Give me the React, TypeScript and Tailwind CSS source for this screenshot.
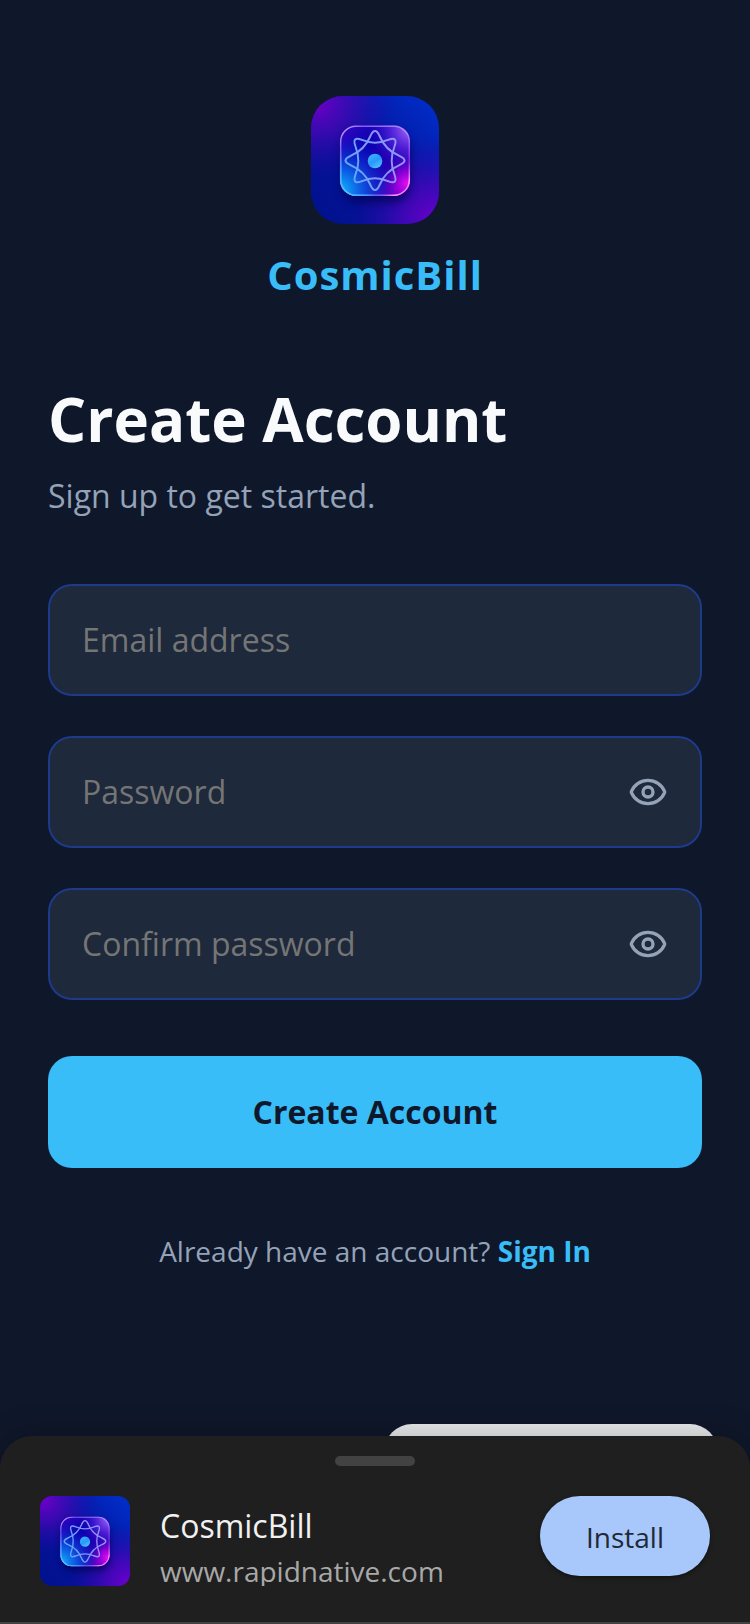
import { useId, useState } from "react";
import { Eye, EyeOff } from "lucide-react";

function AppIcon({ className }: { className: string }) {
  const id = useId().replace(/[^a-zA-Z0-9]/g, "");
  const ref = (name: string) => `url(#${id}${name})`;
  const orbit =
    "M0-29.5C2.6-29.500 3.600-26.600 4.800-24Q10.500-10.500 24-4.800C26.600-3.600 29.500-2.600 29.500 0C29.500 2.600 26.600 3.600 24 4.800Q10.500 10.500 4.800 24C3.600 26.600 2.600 29.500 0 29.500C-2.600 29.500-3.600 26.600-4.800 24Q-10.500 10.500-24 4.800C-26.600 3.600-29.500 2.600-29.500 0C-29.500-2.600-26.600-3.600-24-4.800Q-10.500-10.500-4.800-24C-3.600-26.600-2.600-29.500 0-29.500Z";
  return (
    <svg viewBox="0 0 128 128" className={className} role="img" aria-label="CosmicBill logo">
      <defs>
        <linearGradient id={`${id}base`} x1="0" y1="1" x2="1" y2="0">
          <stop offset="0" stopColor="#00128c" />
          <stop offset="0.5" stopColor="#06129c" />
          <stop offset="1" stopColor="#0030cc" />
        </linearGradient>
        <radialGradient id={`${id}tl`} cx="0.05" cy="0.05" r="0.6">
          <stop offset="0" stopColor="#6c00c8" />
          <stop offset="0.4" stopColor="#4c06b8" stopOpacity="0.7" />
          <stop offset="1" stopColor="#2008a8" stopOpacity="0" />
        </radialGradient>
        <radialGradient id={`${id}br`} cx="0.97" cy="0.97" r="0.66">
          <stop offset="0" stopColor="#6c00cc" />
          <stop offset="0.4" stopColor="#4c04bc" stopOpacity="0.75" />
          <stop offset="1" stopColor="#2008a8" stopOpacity="0" />
        </radialGradient>
        <linearGradient id={`${id}tile`} x1="0" y1="0" x2="1" y2="1">
          <stop offset="0" stopColor="#3408c4" />
          <stop offset="0.35" stopColor="#0c00b0" />
          <stop offset="0.65" stopColor="#2400b0" />
          <stop offset="1" stopColor="#8000d4" />
        </linearGradient>
        <radialGradient id={`${id}cyan`} cx="0" cy="0.92" r="0.8">
          <stop offset="0" stopColor="#12bcff" />
          <stop offset="0.4" stopColor="#0870f0" stopOpacity="0.75" />
          <stop offset="1" stopColor="#0020c8" stopOpacity="0" />
        </radialGradient>
        <radialGradient id={`${id}pink`} cx="0.96" cy="0.82" r="0.38">
          <stop offset="0" stopColor="#e810f0" />
          <stop offset="0.4" stopColor="#c000e8" stopOpacity="0.6" />
          <stop offset="1" stopColor="#6000c8" stopOpacity="0" />
        </radialGradient>
        <radialGradient id={`${id}lilac`} cx="1" cy="0.04" r="0.6">
          <stop offset="0" stopColor="#b070ff" />
          <stop offset="0.5" stopColor="#6a30ec" stopOpacity="0.6" />
          <stop offset="1" stopColor="#4010d0" stopOpacity="0" />
        </radialGradient>
        <linearGradient id={`${id}edge`} x1="0" y1="0" x2="1" y2="1">
          <stop offset="0" stopColor="#d8b0ff" />
          <stop offset="0.16" stopColor="#8858f0" />
          <stop offset="0.5" stopColor="#c0a0ff" stopOpacity="0.8" />
          <stop offset="0.75" stopColor="#a040ff" stopOpacity="0.6" />
          <stop offset="0.9" stopColor="#ffa0ff" />
          <stop offset="1" stopColor="#c030f0" />
        </linearGradient>
        <radialGradient id={`${id}rim`} gradientUnits="userSpaceOnUse" cx="32" cy="97" r="46">
          <stop offset="0" stopColor="#48c8ff" />
          <stop offset="0.5" stopColor="#38a8ff" stopOpacity="0.9" />
          <stop offset="1" stopColor="#4080ff" stopOpacity="0" />
        </radialGradient>
        <linearGradient id={`${id}line`} x1="0" y1="1" x2="1" y2="0">
          <stop offset="0" stopColor="#58b0ff" />
          <stop offset="0.5" stopColor="#7c98f6" />
          <stop offset="1" stopColor="#a890fa" />
        </linearGradient>
        <linearGradient id={`${id}core`} x1="0.2" y1="0" x2="0.8" y2="1">
          <stop offset="0" stopColor="#40b4ff" />
          <stop offset="0.5" stopColor="#2898fc" />
          <stop offset="1" stopColor="#50c8ff" />
        </linearGradient>
        <filter id={`${id}soft`} x="-40%" y="-40%" width="180%" height="180%">
          <feGaussianBlur stdDeviation="5" />
        </filter>
      </defs>
      <rect width="128" height="128" fill={ref("base")} />
      <rect width="128" height="128" fill={ref("tl")} />
      <rect width="128" height="128" fill={ref("br")} />
      <rect x="31" y="36" width="68" height="70" rx="16" fill="#06004c" opacity="0.7" filter={ref("soft")} />
      <rect x="29" y="29.500" width="70" height="70.500" rx="16" fill={ref("tile")} />
      <rect x="29" y="29.500" width="70" height="70.500" rx="16" fill={ref("lilac")} />
      <rect x="29" y="29.500" width="70" height="70.500" rx="16" fill={ref("cyan")} />
      <rect x="29" y="29.500" width="70" height="70.500" rx="16" fill={ref("pink")} />
      <g fill="none" strokeWidth="1.500">
        <rect x="29.700" y="30.200" width="68.600" height="69.100" rx="15.300" stroke={ref("edge")} />
        <rect x="29.700" y="30.200" width="68.600" height="69.100" rx="15.300" stroke={ref("rim")} />
      </g>
      <g transform="translate(64 64.500)" fill="none" stroke={ref("line")} strokeWidth="2">
        <path d={orbit} />
        <path d={orbit} transform="scale(0.95 1.01) rotate(45)" />
      </g>
      <circle cx="64" cy="65" r="7.300" fill={ref("core")} />
    </svg>
  );
}

const fieldClass =
  "h-28 w-full rounded-3xl border-2 border-[#1e3a8a] bg-[#1e293b] pb-[2px] pl-8 text-[32px] text-slate-50 outline-none placeholder:text-[#757575]";

function PasswordField({ label, name }: { label: string; name: string }) {
  const [visible, setVisible] = useState(false);
  const Icon = visible ? EyeOff : Eye;
  return (
    <div className="relative">
      <input
        type={visible ? "text" : "password"}
        name={name}
        aria-label={label}
        placeholder={label}
        className={`${fieldClass} pr-24`}
      />
      <button
        type="button"
        aria-label={visible ? "Hide password" : "Show password"}
        onClick={() => setVisible(!visible)}
        className="absolute inset-y-0 right-[34px] flex items-center text-[#94a3b8]"
      >
        <Icon size={40} />
      </button>
    </div>
  );
}

export default function App() {
  return (
    <div className="relative flex min-h-screen flex-col overflow-hidden bg-[#0f172a] font-['Open_Sans',sans-serif]">
      <main className="flex flex-col px-12 pt-24 pb-52">
        <div className="flex flex-col items-center">
          <AppIcon className="size-32 rounded-[32px]" />
          <p className="mt-6 text-[40px] leading-[54px] font-bold tracking-wide text-[#38bdf8]">CosmicBill</p>
        </div>

        <h1 className="mt-[78px] text-[60px] leading-[78px] font-bold text-slate-50">Create Account</h1>
        <p className="mt-4 text-[32px] leading-[44px] text-[#94a3b8]">Sign up to get started.</p>

        <form className="mt-[66px] flex flex-col" onSubmit={(e) => e.preventDefault()}>
          <div className="flex flex-col gap-10">
            <input
              type="email"
              name="email"
              aria-label="Email address"
              placeholder="Email address"
              className={`${fieldClass} pr-8`}
            />
            <PasswordField label="Password" name="password" />
            <PasswordField label="Confirm password" name="confirm" />
          </div>
          <button
            type="submit"
            className="mt-14 h-28 rounded-3xl bg-[#38bdf8] text-[32px] font-bold text-[#0f172a]"
          >
            Create Account
          </button>
        </form>

        <p className="mt-16 text-center text-[28px] leading-[38px] text-[#94a3b8]">
          Already have an account?{" "}
          <a href="#sign-in" className="font-bold text-[#38bdf8]">
            Sign In
          </a>
        </p>
      </main>

      <div className="absolute right-8 bottom-[120px] h-20 w-[334px] rounded-[28px] bg-[#e8eaec]" />

      <section
        aria-label="Install app"
        className="absolute inset-x-0 bottom-0 flex flex-col rounded-t-[32px] border-b-2 border-[#424242] bg-[#1f1f1f] px-10 pt-5 pb-9 shadow-[0_0_32px_rgba(0,0,0,0.25)]"
      >
        <div className="h-[10px] w-20 self-center rounded-[5px] bg-[#424242]" />
        <div className="mt-[30px] flex items-start">
          <AppIcon className="size-[90px] shrink-0 rounded-xl" />
          <div className="ml-[30px] h-[90px] min-w-0 flex-1 overflow-hidden pt-2">
            <h2 className="text-[32px] leading-[44px] text-[#f1f1f1]">CosmicBill</h2>
            <p className="text-[28px] leading-[46px] text-[#a8a8a8]">www.rapidnative.com</p>
          </div>
          <button
            type="button"
            className="h-20 w-[170px] shrink-0 rounded-full bg-[#a8c7fa] pt-[2px] text-[28px] text-[#1f2937] shadow-[0_2px_4px_rgba(0,0,0,0.4)]"
          >
            Install
          </button>
        </div>
      </section>
    </div>
  );
}
